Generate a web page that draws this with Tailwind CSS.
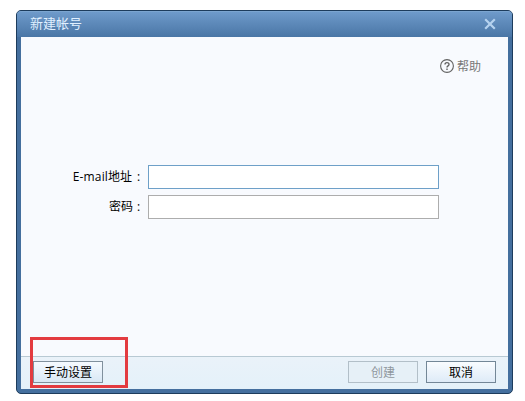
<!DOCTYPE html>
<html lang="zh-CN">
<head>
<meta charset="utf-8">
<title>新建帐号</title>
<script src="https://cdn.jsdelivr.net/npm/@tailwindcss/browser@4"></script>
</head>
<body class="h-[401px] w-[525px] overflow-hidden bg-white pt-[10px] pl-4 font-['Open_Sans','Noto_Sans_CJK_SC',sans-serif] text-xs text-black">
<div class="relative flex h-[384px] w-[497px] flex-col rounded-[5px] border border-[#1d3c5c] bg-[#446f9e] px-1 pb-1">
  <header class="-mx-1 flex h-[26px] shrink-0 items-center justify-between rounded-t-[4px] border-t border-[#7ba5d0] bg-linear-to-b from-[#6e9aca] to-[#4a76a6] pr-[16px] pb-1 pl-[13px]">
    <h1 class="text-[13px] leading-4 text-[#e0f0ff]">新建帐号</h1>
    <button class="relative top-px" aria-label="关闭">
      <svg class="block size-3" viewBox="0 0 12 12" fill="none" stroke="#b5d2ef" stroke-width="2.2"><path d="M1.2 1.2 10.8 10.8M10.8 1.2 1.2 10.8"/></svg>
    </button>
  </header>
  <main class="flex h-[319px] shrink-0 flex-col bg-[#f8fafe]">
    <div class="flex h-[128px] justify-end pt-[20px] pr-[27px]">
      <div class="flex h-[18px] items-center gap-[3px] text-[#777]">
        <svg class="size-[14px]" viewBox="0 0 14 14" fill="none" stroke="#626262" stroke-width="1.1"><circle cx="7" cy="7" r="6.4"/><path stroke-width="1.4" d="M5 5.5C5 3 9 3 9 5.4 9 6.9 7 6.8 7 8.5M7 9.4v1.5"/></svg>
        <span class="pt-0.5 leading-[18px]">帮助</span>
      </div>
    </div>
    <div class="flex flex-col gap-[6px]">
      <label class="flex h-6 items-center"><span class="flex w-[127px] justify-end leading-5"><span class="-mt-px"><span class="tracking-[0.15px]">E-mail</span>地址</span><span class="-mt-px w-[16px] pl-[5px]">:</span></span><input class="h-6 w-[291px] border border-[#6ea0c8] bg-white outline-none"></label>
      <label class="flex h-6 items-center"><span class="flex w-[127px] justify-end leading-5"><span>密码</span><span class="w-[15px] pl-[4px]">:</span></span><input class="h-6 w-[291px] border border-[#adadad] bg-white outline-none"></label>
    </div>
  </main>
  <footer class="flex h-[33px] shrink-0 items-start border-t border-[#b8c9d3] bg-linear-to-b from-[#eaf2f9] to-[#e4f1f9] pt-1 pr-3 pl-3">
    <button class="h-[22px] w-[70px] border border-[#80909d] bg-linear-to-b from-[#f5faff] to-[#d9e8f5] pt-px leading-5">手动设置</button>
    <button class="mr-2 ml-auto h-[22px] w-[70px] border border-[#b2bfc8] bg-[#e6f0f7] pt-px leading-5 text-[#8f979d]">创建</button>
    <button class="h-[22px] w-[70px] border border-[#738797] bg-linear-to-b from-[#f9fcff] to-[#deebf7] pt-px leading-5">取消</button>
  </footer>
  <div class="pointer-events-none absolute top-[326px] left-[13px] h-[51px] w-[98px] border-3 border-[#e33b40]"></div>
</div>
</body>
</html>
